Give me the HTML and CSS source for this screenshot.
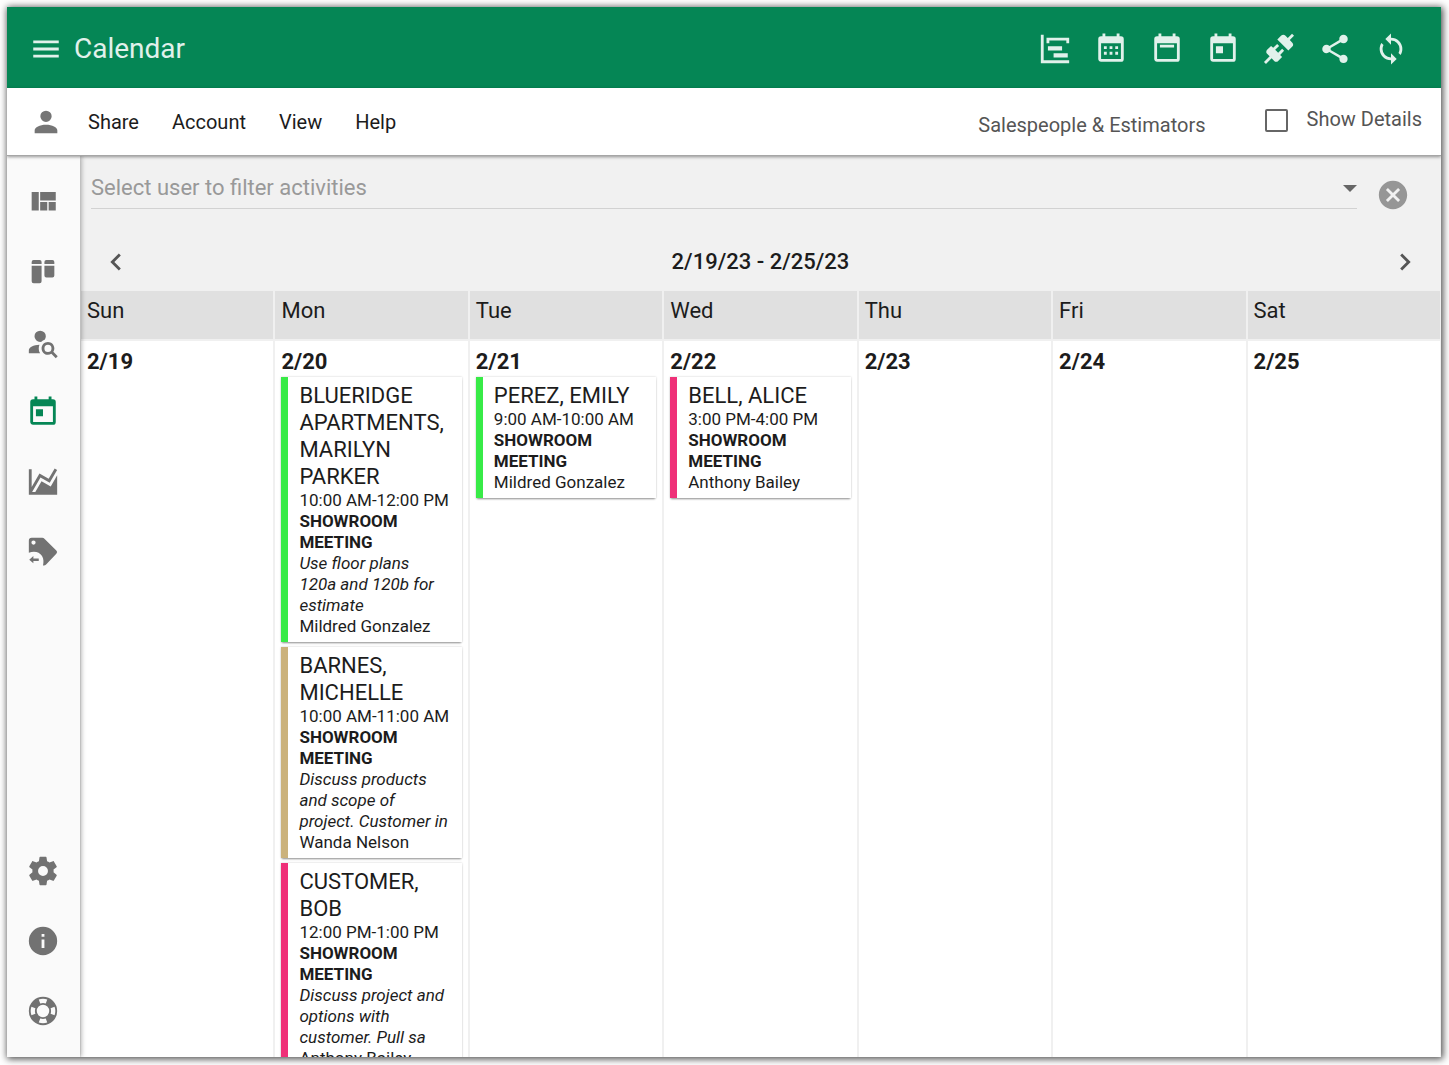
FILE: index.html
```html
<!DOCTYPE html>
<html lang="en">
<head>
<meta charset="utf-8">
<meta name="viewport" content="width=device-width, initial-scale=1">
<title>Calendar</title>
<link rel="stylesheet" href="styles.css">
</head>
<body>
<div class="app">
  <header class="topbar">
    <button class="icon-btn" type="button" aria-label="Menu"><svg class="icon" viewBox="0 0 24 24"><path d="M3,6H21V8H3V6M3,11H21V13H3V11M3,16H21V18H3V16Z"/></svg></button>
    <h1 class="title">Calendar</h1>
    <div class="tools">
      <button class="icon-btn" type="button" aria-label="Timeline"><svg class="icon" viewBox="0 0 24 24"><path d="M2,2H4V20H22V22H2V2M7,10H17V13H7V10M11,15H21V18H11V15M6,4H22V8H20V6H8V8H6V4Z"/></svg></button>
      <button class="icon-btn" type="button" aria-label="Month"><svg class="icon" viewBox="0 0 24 24"><path d="M9,10V12H7V10H9M13,10V12H11V10H13M17,10V12H15V10H17M19,3A2,2 0 0,1 21,5V19A2,2 0 0,1 19,21H5C3.89,21 3,20.1 3,19V5A2,2 0 0,1 5,3H6V1H8V3H16V1H18V3H19M19,19V8H5V19H19M9,14V16H7V14H9M13,14V16H11V14H13M17,14V16H15V14H17Z"/></svg></button>
      <button class="icon-btn" type="button" aria-label="Week"><svg class="icon" viewBox="0 0 24 24"><path d="M7,9H17V11H7V9M19,3A2,2 0 0,1 21,5V19A2,2 0 0,1 19,21H5C3.89,21 3,20.1 3,19V5A2,2 0 0,1 5,3H6V1H8V3H16V1H18V3H19M19,19V8H5V19H19Z"/></svg></button>
      <button class="icon-btn" type="button" aria-label="Day"><svg class="icon" viewBox="0 0 24 24"><path d="M7,10H12V15H7V10M19,3A2,2 0 0,1 21,5V19A2,2 0 0,1 19,21H5C3.89,21 3,20.1 3,19V5A2,2 0 0,1 5,3H6V1H8V3H16V1H18V3H19M19,19V8H5V19H19Z"/></svg></button>
      <button class="icon-btn" type="button" aria-label="Connect"><svg class="icon" viewBox="0 0 24 24"><path d="M21.4 7.5C22.2 8.3 22.2 9.6 21.4 10.3L18.6 13.1L10.8 5.3L13.6 2.5C14.4 1.7 15.7 1.7 16.4 2.5L18.2 4.3L21.2 1.3L22.6 2.7L19.6 5.7L21.4 7.5M15.6 13.3L14.2 11.9L11.4 14.7L9.3 12.6L12.1 9.8L10.7 8.4L7.9 11.2L6.4 9.8L3.6 12.6C2.8 13.4 2.8 14.7 3.6 15.4L5.4 17.2L1.4 21.2L2.8 22.6L6.8 18.6L8.6 20.4C9.4 21.2 10.7 21.2 11.4 20.4L14.2 17.6L12.8 16.2L15.6 13.3Z"/></svg></button>
      <button class="icon-btn" type="button" aria-label="Share"><svg class="icon" viewBox="0 0 24 24"><path d="M18,16.08C17.24,16.08 16.56,16.38 16.04,16.85L8.91,12.7C8.96,12.47 9,12.24 9,12C9,11.76 8.96,11.53 8.91,11.3L15.96,7.19C16.5,7.69 17.21,8 18,8A3,3 0 0,0 21,5A3,3 0 0,0 18,2A3,3 0 0,0 15,5C15,5.24 15.04,5.47 15.09,5.7L8.04,9.81C7.5,9.31 6.79,9 6,9A3,3 0 0,0 3,12A3,3 0 0,0 6,15C6.79,15 7.5,14.69 8.04,14.19L15.16,18.34C15.11,18.55 15.08,18.77 15.08,19C15.08,20.61 16.39,21.91 18,21.91C19.61,21.91 20.92,20.61 20.92,19A2.92,2.92 0 0,0 18,16.08Z"/></svg></button>
      <button class="icon-btn" type="button" aria-label="Sync"><svg class="icon" viewBox="0 0 24 24"><path d="M12,18A6,6 0 0,1 6,12C6,11 6.25,10.03 6.7,9.2L5.24,7.74C4.46,8.97 4,10.43 4,12A8,8 0 0,0 12,20V23L16,19L12,15M12,4V1L8,5L12,9V6A6,6 0 0,1 18,12C18,13 17.75,13.97 17.3,14.8L18.76,16.26C19.54,15.03 20,13.57 20,12A8,8 0 0,0 12,4Z"/></svg></button>
    </div>
  </header>

  <nav class="menubar">
    <svg class="icon user" viewBox="0 0 24 24"><path d="M12,4A4,4 0 0,1 16,8A4,4 0 0,1 12,12A4,4 0 0,1 8,8A4,4 0 0,1 12,4M12,14C16.42,14 20,15.79 20,18V20H4V18C4,15.79 7.58,14 12,14Z"/></svg>
    <div class="menus">
      <button class="menu" type="button">Share</button>
      <button class="menu" type="button">Account</button>
      <button class="menu" type="button">View</button>
      <button class="menu" type="button">Help</button>
    </div>
    <span class="group">Salespeople &amp; Estimators</span>
    <label class="details"><input class="check" type="checkbox">Show Details</label>
  </nav>

  <div class="body">
    <nav class="sidebar">
      <a class="side-link" href="#" aria-label="Dashboard"><svg class="icon" viewBox="0 0 24 24"><path d="M10,5V11H21V5M16,18H21V12H16M4,18H9V5H4M10,18H15V12H10V18Z"/></svg></a>
      <a class="side-link" href="#" aria-label="Boards"><svg class="icon" viewBox="0 0 24 24"><path d="M4,6.3V5A1.4,1.4 0 0,1 5.400,3.600H9.600A1.400,1.400 0 0,1 11,5V6.300ZM4,7.500H11V18.600A1.400,1.400 0 0,1 9.600,20H5.400A1.400,1.400 0 0,1 4,18.600ZM13,6.300V5A1.400,1.400 0 0,1 14.400,3.600H18.600A1.400,1.400 0 0,1 20,5V6.300ZM13,7.500H20V14.400A1.400,1.400 0 0,1 18.600,15.800H14.400A1.400,1.400 0 0,1 13,14.400Z"/></svg></a>
      <a class="side-link" href="#" aria-label="Find customer"><svg class="icon" viewBox="0 0 24 24"><path d="M15.5,12C18,12 20,14 20,16.5C20,17.38 19.75,18.21 19.31,18.9L22.39,22L21,23.39L17.88,20.32C17.19,20.75 16.37,21 15.5,21C13,21 11,19 11,16.5C11,14 13,12 15.5,12M15.5,14A2.5,2.5 0 0,0 13,16.5A2.5,2.5 0 0,0 15.5,19A2.5,2.5 0 0,0 18,16.5A2.5,2.5 0 0,0 15.5,14M10,4A4,4 0 0,1 14,8C14,8.91 13.69,9.75 13.18,10.43C12.32,10.75 11.55,11.26 10.91,11.9L10,12A4,4 0 0,1 6,8A4,4 0 0,1 10,4M2,20V18C2,15.88 5.31,14.14 9.5,14C9.18,14.78 9,15.62 9,16.5C9,17.79 9.38,19 10,20H2Z"/></svg></a>
      <a class="side-link active" href="#" aria-label="Calendar"><svg class="icon" viewBox="0 0 24 24"><path d="M7,10H12V15H7V10M19,3A2,2 0 0,1 21,5V19A2,2 0 0,1 19,21H5C3.89,21 3,20.1 3,19V5A2,2 0 0,1 5,3H6V1H8V3H16V1H18V3H19M19,19V8H5V19H19Z"/></svg></a>
      <a class="side-link" href="#" aria-label="Reports"><svg class="icon" viewBox="0 0 24 24"><path d="M17.45,15.18L22,7.31V19L22,21H2V3H4V15.54L9.5,6L16,9.78L20.24,2.45L21.97,3.45L16.74,12.5L10.23,8.75L4.31,19H6.57L10.96,11.44L17.45,15.18Z"/></svg></a>
      <a class="side-link" href="#" aria-label="Returns"><svg class="icon" viewBox="0 0 24 24"><path fill-rule="evenodd" d="M4,2H11.500C12.100,2 12.600,2.200 13,2.600L21.400,11A1.500,1.500 0 0,1 21.400,13.200L14.200,20.900C13.600,21.500 12.800,21.700 12,21.500C12.500,19.500 12.600,17 11.300,14.900C9.500,12 5.800,11 2,12.600V4A2,2 0 0,1 4,2ZM5.300,3.800A1.500,1.500 0 1,0 5.300,6.800A1.500,1.500 0 1,0 5.300,3.800ZM2.300,17.400L5.200,14.900V16.500H9V18.300H5.200V19.900Z"/></svg></a>
      <span class="spacer"></span>
      <a class="side-link" href="#" aria-label="Settings"><svg class="icon" viewBox="0 0 24 24"><path d="M12,15.5A3.5,3.5 0 0,1 8.5,12A3.5,3.5 0 0,1 12,8.5A3.5,3.5 0 0,1 15.5,12A3.5,3.5 0 0,1 12,15.5M19.43,12.97C19.47,12.65 19.5,12.33 19.5,12C19.5,11.67 19.47,11.34 19.43,11L21.54,9.37C21.73,9.22 21.78,8.95 21.66,8.73L19.66,5.27C19.54,5.05 19.27,4.96 19.05,5.05L16.56,6.05C16.04,5.66 15.5,5.32 14.87,5.07L14.5,2.42C14.46,2.18 14.25,2 14,2H10C9.75,2 9.54,2.18 9.5,2.42L9.13,5.07C8.5,5.32 7.96,5.66 7.44,6.05L4.95,5.05C4.73,4.96 4.46,5.05 4.34,5.27L2.34,8.73C2.21,8.95 2.27,9.22 2.46,9.37L4.57,11C4.53,11.34 4.5,11.67 4.5,12C4.5,12.33 4.53,12.65 4.57,12.97L2.46,14.63C2.27,14.78 2.21,15.05 2.34,15.27L4.34,18.73C4.46,18.95 4.73,19.03 4.95,18.95L7.44,17.94C7.96,18.34 8.5,18.68 9.13,18.93L9.5,21.58C9.54,21.82 9.75,22 10,22H14C14.25,22 14.46,21.82 14.5,21.58L14.87,18.93C15.5,18.67 16.04,18.34 16.56,17.94L19.05,18.95C19.27,19.03 19.54,18.95 19.66,18.73L21.66,15.27C21.78,15.05 21.73,14.78 21.54,14.63L19.43,12.97Z"/></svg></a>
      <a class="side-link" href="#" aria-label="About"><svg class="icon" viewBox="0 0 24 24"><path d="M13,9H11V7H13M13,17H11V11H13M12,2A10,10 0 0,0 2,12A10,10 0 0,0 12,22A10,10 0 0,0 22,12A10,10 0 0,0 12,2Z"/></svg></a>
      <a class="side-link" href="#" aria-label="Support"><svg class="icon" viewBox="0 0 24 24"><circle cx="12" cy="12" r="7.200" fill="none" stroke="currentColor" stroke-width="5.600"/><circle cx="12" cy="12" r="7.200" fill="none" stroke="#fafafa" stroke-width="3" pathLength="80" stroke-dasharray="9 11" stroke-dashoffset="4.500"/></svg></a>
    </nav>

    <main class="main">
      <div class="filter">
        <div class="select-wrap">
          <select class="select" aria-label="Select user to filter activities"><option>Select user to filter activities</option></select>
          <svg class="caret" viewBox="0 0 14 7"><path d="M0,0H14L7,7Z"/></svg>
        </div>
        <button class="icon-btn clear" type="button" aria-label="Clear"><svg class="icon" viewBox="0 0 24 24"><path d="M12,2C17.53,2 22,6.47 22,12C22,17.53 17.53,22 12,22C6.47,22 2,17.53 2,12C2,6.47 6.47,2 12,2M15.59,7L12,10.59L8.41,7L7,8.41L10.59,12L7,15.59L8.41,17L12,13.41L15.59,17L17,15.59L13.41,12L17,8.41L15.59,7Z"/></svg></button>
      </div>
      <div class="week">
        <button class="icon-btn" type="button" aria-label="Previous week"><svg class="icon" viewBox="0 0 24 24"><path d="M15.41,16.58L10.83,12L15.41,7.41L14,6L8,12L14,18L15.41,16.58Z"/></svg></button>
        <h2 class="range">2/19/23 - 2/25/23</h2>
        <button class="icon-btn" type="button" aria-label="Next week"><svg class="icon" viewBox="0 0 24 24"><path d="M8.59,16.58L13.17,12L8.59,7.41L10,6L16,12L10,18L8.59,16.58Z"/></svg></button>
      </div>
      <div class="calendar">
        <table class="grid">
          <thead>
            <tr><th>Sun</th><th>Mon</th><th>Tue</th><th>Wed</th><th>Thu</th><th>Fri</th><th>Sat</th></tr>
          </thead>
          <tbody>
            <tr>
              <td><div class="date">2/19</div></td>
              <td>
                <div class="date">2/20</div>
                <article class="event green">
                  <h3 class="who">BLUERIDGE APARTMENTS, MARILYN PARKER</h3>
                  <div>10:00 AM-12:00 PM</div>
                  <div class="kind">SHOWROOM<br>MEETING</div>
                  <div class="note">Use floor plans<br>120a and 120b for estimate</div>
                  <div>Mildred Gonzalez</div>
                </article>
                <article class="event tan">
                  <h3 class="who">BARNES, MICHELLE</h3>
                  <div>10:00 AM-11:00 AM</div>
                  <div class="kind">SHOWROOM<br>MEETING</div>
                  <div class="note">Discuss products<br>and scope of<br>project. Customer in</div>
                  <div>Wanda Nelson</div>
                </article>
                <article class="event pink">
                  <h3 class="who">CUSTOMER,<br>BOB</h3>
                  <div>12:00 PM-1:00 PM</div>
                  <div class="kind">SHOWROOM<br>MEETING</div>
                  <div class="note">Discuss project and<br>options with<br>customer. Pull sa</div>
                  <div>Anthony Bailey</div>
                </article>
              </td>
              <td>
                <div class="date">2/21</div>
                <article class="event green">
                  <h3 class="who">PEREZ, EMILY</h3>
                  <div>9:00 AM-10:00 AM</div>
                  <div class="kind">SHOWROOM<br>MEETING</div>
                  <div>Mildred Gonzalez</div>
                </article>
              </td>
              <td>
                <div class="date">2/22</div>
                <article class="event pink">
                  <h3 class="who">BELL, ALICE</h3>
                  <div>3:00 PM-4:00 PM</div>
                  <div class="kind">SHOWROOM<br>MEETING</div>
                  <div>Anthony Bailey</div>
                </article>
              </td>
              <td><div class="date">2/23</div></td>
              <td><div class="date">2/24</div></td>
              <td><div class="date">2/25</div></td>
            </tr>
          </tbody>
        </table>
      </div>
    </main>
  </div>
</div>
</body>
</html>
```
FILE: styles.css
```css
* { box-sizing: border-box; }

body {
  margin: 0;
  padding: 7px 8px 8px 7px;
  height: 100vh;
  background: #fff;
  color: #1c1c1c;
  font-family: Roboto, "Liberation Sans", sans-serif;
}

h1, h2, h3 { margin: 0; font-weight: 400; }

button, select {
  border: 0;
  padding: 0;
  background: none;
  color: inherit;
  font: inherit;
}

.app {
  display: flex;
  flex-direction: column;
  height: 100%;
  overflow: hidden;
  background: #fff;
  box-shadow: 1px 1px 7px 1px rgba(0, 0, 0, 0.7);
}

.icon { display: block; width: 34px; height: 34px; fill: currentColor; }
.icon-btn { flex: none; }

/* Header */
.topbar {
  display: flex;
  align-items: center;
  flex: none;
  height: 81px;
  padding: 3px 33px 0 22px;
  background: #058655;
  color: #e1f1eb;
}
.title { margin-left: 11px; font-size: 28px; line-height: 36px; }
.tools { display: flex; gap: 22px; margin-left: auto; }

/* Menu row */
.menubar {
  position: relative;
  z-index: 2;
  display: flex;
  align-items: center;
  flex: none;
  height: 68px;
  padding: 0 19px 0 22px;
  background: #fff;
  box-shadow: 0 1px 3px rgba(0, 0, 0, 0.4);
  border-bottom: 1px solid #a6a6a6;
  font-size: 20px;
  line-height: 24px;
}
.user { color: #757575; }
.menus { display: flex; gap: 33px; margin-left: 25px; }
.group { margin-left: auto; padding-top: 6px; color: #555; }
.details {
  display: flex;
  align-items: center;
  gap: 19px;
  margin-left: 59px;
  padding-bottom: 6px;
  color: #555;
}
.check {
  appearance: none;
  width: 23px;
  height: 23px;
  margin: 4px 0 0;
  border: 2px solid #666;
  border-radius: 2px;
  background: #fff;
}

/* Body */
.body { display: flex; flex: 1; min-height: 0; }
.sidebar {
  position: relative;
  z-index: 1;
  display: flex;
  flex-direction: column;
  flex: none;
  width: 73px;
  padding: 11px 1px 11px 0;
  background: #fafafa;
  box-shadow: 1px 0 5px rgba(0, 0, 0, 0.35);
  color: #727272;
}
.side-link {
  display: flex;
  align-items: center;
  justify-content: center;
  height: 70px;
  color: inherit;
}
.active { color: #058655; }
.spacer { flex: 1; }

.main {
  display: flex;
  flex-direction: column;
  flex: 1;
  min-width: 0;
  background: #f1f1f1;
}
.filter {
  display: flex;
  align-items: center;
  flex: none;
  gap: 19px;
  height: 77px;
  padding: 0 31px 0 11px;
}
.select-wrap {
  display: flex;
  align-items: center;
  flex: 1;
  height: 42px;
  margin-bottom: 13px;
  padding-top: 6px;
  border-bottom: 1px solid #d2d2d2;
}
.select {
  appearance: none;
  flex: 1;
  align-self: flex-start;
  height: 30px;
  color: #999;
  font-size: 22px;
  line-height: 28px;
}
.caret { width: 14px; height: 7px; margin-bottom: 5px; fill: #666; }
.clear { color: #969696; }
.week {
  display: flex;
  align-items: center;
  justify-content: space-between;
  flex: none;
  height: 57px;
  padding: 0 19px;
  color: #555;
}
.range { color: #1c1c1c; font-size: 22px; font-weight: 500; line-height: 28px; }

/* Week grid */
.calendar { flex: 1; min-height: 0; overflow: hidden; }
.grid {
  width: 100%;
  height: 100%;
  table-layout: fixed;
  border-collapse: separate;
  border-spacing: 0;
  background: #fff;
}
th, td { border: 1px solid #f0f0f0; text-align: left; vertical-align: top; }
th {
  height: 50px;
  padding: 6px 6px 0;
  background: #e0e0e0;
  font-size: 22px;
  font-weight: 400;
  line-height: 28px;
}
td { padding: 5px 6px 0; }
.date { font-size: 22px; font-weight: 700; line-height: 31px; }

.event {
  margin-bottom: 5px;
  padding: 5px 0 5px 11px;
  border-left: 7px solid;
  background: #fff;
  box-shadow: 0 2px 2px -1px rgba(0, 0, 0, 0.4), 0 0 2px rgba(0, 0, 0, 0.2);
  font-size: 17px;
  line-height: 21px;
}
.event > * { color: #1c1c1c; }
.who { font-size: 22px; line-height: 27px; }
.kind { font-weight: 700; }
.note { font-style: italic; }
.green { border-color: #38eb47; }
.tan { border-color: #cbb27c; }
.pink { border-color: #ef3078; }
```
